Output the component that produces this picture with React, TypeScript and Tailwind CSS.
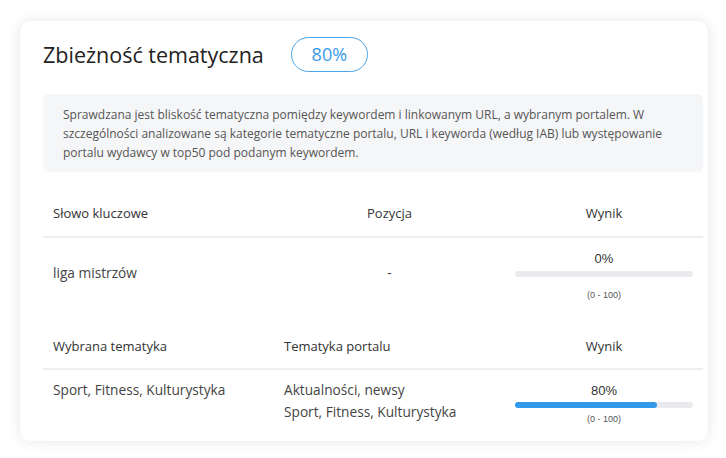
import React from 'react';

const Bar = ({ value }: { value: number }) => (
  <div className="h-[6px] w-full rounded-full bg-[#e8eaed]">
    <div className="h-[6px] rounded-full bg-[#3399ea]" style={{ width: `${value}%` }}></div>
  </div>
);

const App = () => {
  const font = { fontFamily: '"Open Sans", sans-serif' };
  const arial = { fontFamily: '"Liberation Sans", Arial, sans-serif' };

  return (
    <div className="min-h-[458px] w-[726px] bg-white pt-[21px] pl-[20px]" style={font}>
      <div className="w-[688px] rounded-[10px] bg-white pt-[16px] pr-[5px] pb-[16px] pl-[23px] shadow-[0_0_14px_rgba(0,0,0,0.10)]">
        <div className="flex items-center">
          <h1 className="text-[21.5px] leading-[35px] text-[#222]">Zbieżność tematyczna</h1>
          <span className="ml-[27px] flex h-[35px] w-[77px] items-center justify-center rounded-full border border-[#4aa3e8] text-[18px] font-medium text-[#3a9ae6]">
            80%
          </span>
        </div>

        <div className="mt-[22px] rounded-[6px] bg-[#f5f6f8] pt-[11px] pr-[16px] pb-[10px] pl-[20px] text-[12px] leading-[19px] text-[#555]">
          Sprawdzana jest bliskość tematyczna pomiędzy keywordem i linkowanym URL, a wybranym portalem. W szczególności analizowane są kategorie tematyczne portalu, URL i keyworda (według IAB) lub występowanie portalu wydawcy w top50 pod podanym keywordem.
        </div>

        <div className="mt-[20px] grid grid-cols-[231px_231px_198px] border-b-2 border-[#eceef0] text-[13px] text-[#333]">
          <div className="flex h-[44px] items-center pl-[10px]">Słowo kluczowe</div>
          <div className="flex h-[44px] items-center justify-center">Pozycja</div>
          <div className="flex h-[44px] items-center justify-center">Wynik</div>
        </div>
        <div className="grid h-[70px] grid-cols-[231px_231px_198px] text-[13.7px] text-[#444]">
          <div className="flex items-center pl-[10px]">liga mistrzów</div>
          <div className="flex items-center justify-center">-</div>
          <div className="flex flex-col items-center px-[10px] pt-[12px]">
            <div className="text-[13px] leading-[18px] text-[#333]" style={arial}>0%</div>
            <div className="mt-[3px] w-full"><Bar value={0} /></div>
            <div className="mt-[12px] text-[9px] leading-[12px] text-[#555]" style={arial}>(0 - 100)</div>
          </div>
        </div>

        <div className="mt-[18px] grid grid-cols-[231px_231px_198px] border-b-2 border-[#eceef0] text-[13px] text-[#333]">
          <div className="flex h-[42px] items-center pl-[10px]">Wybrana tematyka</div>
          <div className="flex h-[42px] items-center pl-[10px]">Tematyka portalu</div>
          <div className="flex h-[42px] items-center justify-center">Wynik</div>
        </div>
        <div className="grid grid-cols-[231px_231px_198px] pt-[9px] text-[13.7px] leading-[22px] text-[#444]">
          <div className="pl-[10px]">Sport, Fitness, Kulturystyka</div>
          <div className="pl-[10px]">
            <div>Aktualności, newsy</div>
            <div>Sport, Fitness, Kulturystyka</div>
          </div>
          <div className="flex flex-col items-center px-[10px] pt-[3px]">
            <div className="text-[13px] leading-[18px] text-[#333]" style={arial}>80%</div>
            <div className="mt-[2px] w-full"><Bar value={80} /></div>
            <div className="mt-[5px] text-[9px] leading-[12px] text-[#555]" style={arial}>(0 - 100)</div>
          </div>
        </div>
      </div>
    </div>
  );
};

export default App;
